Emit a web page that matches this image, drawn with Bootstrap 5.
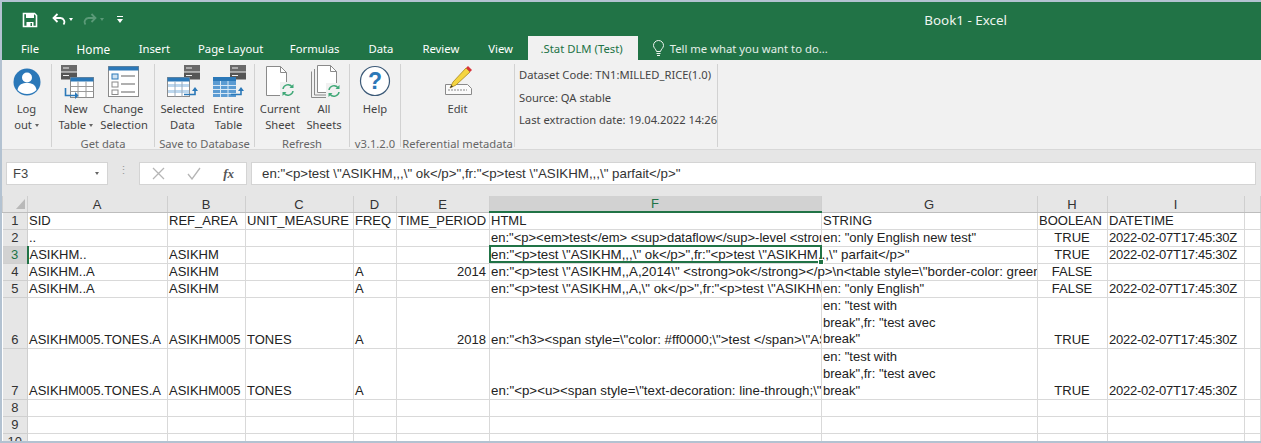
<!DOCTYPE html>
<html lang="en">
<head>
  <meta charset="UTF-8" />
  <meta name="viewport" content="width=device-width, initial-scale=1.0"/>
  <title>Book1 - Excel</title>
  <link href="https://cdn.jsdelivr.net/npm/bootstrap@5.3.3/dist/css/bootstrap.min.css" rel="stylesheet"/>
  <style>
    html, body { height: 443px; overflow: hidden; background: #fff; }
    .xl-window { height: 443px; width: 1261px; overflow: hidden; border: 2px solid #b3c2d1; border-right-width: 0; box-sizing: border-box; font-family: "Noto Sans", "Open Sans", sans-serif; font-size: 11.2px; color: #444; }
    .xl-top { background: #217346; color: #fff; height: 58px; flex: none; }
    .xl-qat { height: 34px; padding-left: 20px; padding-top: 1px; }
    .xl-m6 { margin-left: 6px; } .xl-m10 { margin-left: 10px; } .xl-m13 { margin-left: 13px; } .xl-m14 { margin-left: 14px; }
    .xl-title { margin-right: 254px; color: #eef5f0; font-size: 13.4px; padding-top: 1px; }
    .xl-tabs { height: 24px; }
    .xl-tabs .nav-link { color: #fff; padding: 4px 14.5px 0; height: 24px; font-size: 11.3px; line-height: 18px; }
    .xl-tabs .xl-file { padding: 4px 23px 0 19px; }
    .xl-tabs .xl-t-insert { padding-right: 13.5px; }
    .xl-tabs .xl-t-page { padding-right: 12px; }
    .xl-tabs .xl-t-home { font-size: 11.8px; padding-right: 14px; }
    .xl-tabs .xl-active { background: #f1f1f1; color: #217346; padding: 4px 15px 0 13px; margin-right: 14px; }
    .xl-tell { color: #e3efe8; gap: 5px; padding-top: 4px; line-height: 18px; font-size: 11.3px; }
    .xl-ribbon { background: #f1f1f1; height: 90px; flex: none; padding-top: 4px; border-bottom: 1px solid #d8d8d8; }
    .xl-group { height: 83px; border-right: 1px solid #d2d2d2; flex: none; }
    .xl-btns { height: 72px; flex: none; }
    .xl-btn { width: 46px; flex: none; text-align: center; line-height: 16px; color: #444; white-space: nowrap; }
    .xl-btn svg { display: block; margin: 0 auto 1px; height: 36px; width: 40px; }
    .xl-btn span { display: block; }
    .xl-narrow { width: 44px; }
    .xl-pe7 { padding-right: 7px; } .xl-ps2 { padding-left: 2px; } .xl-ms2 { margin-left: 1.5px; }
    .xl-label { color: #666; text-align: center; line-height: 14px; white-space: nowrap; padding-top: 1px; }
    .xl-caret { display: inline-block; width: 0; height: 0; border: 2.5px solid transparent; border-top: 3px solid #666; border-bottom: 0; vertical-align: 2px; margin-left: 3px; }
    .xl-g1 { width: 50px; } .xl-g2 { width: 103px; } .xl-g3 { width: 100px; } .xl-g4 { width: 95px; } .xl-g5 { width: 51px; } .xl-g6 { width: 114px; } .xl-g7 { width: 203px; }
    .xl-info { padding: 0 0 0 4px; line-height: 22.5px; white-space: nowrap; }
    .xl-strip { background: #e6e6e6; height: 46px; flex: none; padding: 12px 4px 0; gap: 0; }
    .xl-box { background: #fff; border: 1px solid #d4d4d4; height: 23px; flex: none; line-height: 21px; }
    .xl-name { width: 102px; padding-left: 6px; color: #444; font-family: "Liberation Sans", Arial, sans-serif; font-size: 13px; }
    .xl-dots { width: 31px; flex: none; text-align: center; color: #999; }
    .xl-fbtns { width: 108px; margin-right: 4px; padding: 0 12px; }
    .xl-fx { font-family: "Liberation Serif", serif; font-style: italic; font-weight: bold; font-size: 13px; color: #555; }
    .xl-input { width: 1005px; padding-left: 10px; font-family: "Liberation Sans", Arial, sans-serif; font-size: 13.3px; color: #333; white-space: nowrap; overflow: hidden; }
    .xl-grid { position: relative; flex: none; }
    .xl-sheet { table-layout: fixed; width: 1259px; border-collapse: collapse; margin: 0; font-family: "Liberation Sans", Arial, sans-serif; font-size: 13px; color: #222; }
    .xl-sheet td, .xl-sheet th { height: 17px; padding: 0 2px 0 1px; line-height: 16px; border: 1px solid #d9d9d9; white-space: nowrap; overflow: hidden; vertical-align: bottom; font-weight: normal; background: #fff; color: #222; box-shadow: none; }
    .xl-sheet thead th { height: 16px; line-height: 15px; background: #e6e6e6; text-align: center; font-size: 13px; border-color: #cfcfcf; color: #333; border-top: 0; border-bottom-color: #bdbdbd; }
    .xl-sheet tbody th { background: #e6e6e6; text-align: center; font-size: 13px; color: #333; border-color: #cfcfcf; padding: 0; border-left: 0; }
    .xl-sheet thead th.xl-selcol { background: #d2d2d2; color: #217346; border-bottom: 2px solid #217346; }
    .xl-sheet tbody th.xl-selrow { background: #d2d2d2; color: #217346; border-right: 2px solid #217346; }
    .xl-sheet tr.xl-tall td, .xl-sheet tr.xl-tall th { height: 51px; }
    .xl-sheet td.xl-wrap { white-space: normal; line-height: 16.7px; }
    .xl-sheet td.xl-num { text-align: right; padding-right: 3px; }
    .xl-sheet td.xl-mid { text-align: center; }
    .xl-sheet td.xl-date { letter-spacing: -.25px; }
    .xl-sheet td.xl-f { font-size: 13.3px; }
    .xl-corner { position: absolute; left: 14px; top: 3px; width: 0; height: 0; border-left: 9px solid transparent; border-bottom: 10px solid #b9b9b9; }
    .xl-cursor { position: absolute; left: 487px; top: 49px; width: 333px; height: 18px; border: 2px solid #217346; pointer-events: none; }
    .xl-handle { position: absolute; right: -4px; bottom: -4px; width: 6px; height: 6px; background: #217346; border: 1px solid #fff; }
  </style>
</head>
<body>
  <svg width="0" height="0" class="d-block" aria-hidden="true">
    <defs>
      <symbol id="i-server" viewBox="0 0 16 15">
        <rect x="0" y="0" width="16" height="6.5" fill="#6a6a6a"/><rect x="2" y="2.5" width="6" height="1" fill="#eee"/>
        <rect x="0" y="7.5" width="16" height="7" fill="#555"/><rect x="2" y="10" width="6" height="1" fill="#eee"/>
      </symbol>
      <symbol id="i-refresh" viewBox="0 0 14 14">
        <path d="M2 6a5 5 0 0 1 9-2.2M12 8a5 5 0 0 1-9 2.2" fill="none" stroke="#3fa877" stroke-width="1.5"/>
        <path d="M12.5 1v4h-4zM1.5 13V9h4z" fill="#3fa877"/>
      </symbol>
    </defs>
  </svg>
  <div class="xl-window d-flex flex-column">
    <div class="xl-top d-flex flex-column">
      <div class="xl-qat d-flex align-items-center">
        <svg width="16" height="16" viewBox="0 0 16 16"><path d="M1.5 1.5h11l2 2v11h-13z" fill="none" stroke="#fff" stroke-width="1.6"/><rect x="4" y="2" width="8" height="4" fill="#fff"/><rect x="4.5" y="10" width="7" height="4.5" fill="#fff"/><rect x="8.5" y="11" width="1.5" height="3" fill="#217346"/></svg>
        <svg class="xl-m14" width="14" height="14" viewBox="0 0 14 14"><path d="M5.5 1L1.5 5l4 4" fill="none" stroke="#fff" stroke-width="1.8"/><path d="M2 5h6.5a4 4 0 0 1 3 6.5" fill="none" stroke="#fff" stroke-width="1.8"/></svg>
        <span class="xl-caret xl-m6" style="border-top-color:#fff"></span>
        <svg class="xl-m10" width="14" height="14" viewBox="0 0 14 14"><path d="M8.5 1l4 4-4 4" fill="none" stroke="#5b9a78" stroke-width="1.8"/><path d="M12 5H5.5a4 4 0 0 0-3 6.5" fill="none" stroke="#5b9a78" stroke-width="1.8"/></svg>
        <span class="xl-caret xl-m6" style="border-top-color:#5b9a78"></span>
        <svg class="xl-m13" width="6" height="8" viewBox="0 0 6 8"><rect x="0" y="0" width="6" height="1" fill="#fff"/><path d="M0 3h6L3 7z" fill="#fff"/></svg>
        <div class="xl-title ms-auto">Book1 - Excel</div>
      </div>
      <nav class="nav xl-tabs flex-nowrap">
        <a class="nav-link xl-file" href="#">File</a>
        <a class="nav-link xl-t-home" href="#">Home</a>
        <a class="nav-link xl-t-insert" href="#">Insert</a>
        <a class="nav-link xl-t-page" href="#">Page Layout</a>
        <a class="nav-link" href="#">Formulas</a>
        <a class="nav-link" href="#">Data</a>
        <a class="nav-link" href="#">Review</a>
        <a class="nav-link" href="#">View</a>
        <a class="nav-link xl-active" href="#">.Stat DLM (Test)</a>
        <div class="xl-tell d-flex">
          <svg width="13" height="17" viewBox="0 0 13 17"><path d="M4.5 11.5C4 9 1.5 8 1.5 5.5a5 5 0 0 1 10 0C11.5 8 9 9 8.5 11.5zM4.5 13.5h4M5 15.5h3" fill="none" stroke="#eef5f0" stroke-width="1"/></svg>
          <span>Tell me what you want to do...</span>
        </div>
      </nav>
    </div>

    <div class="xl-ribbon d-flex">
      <div class="xl-group xl-g1 d-flex flex-column">
        <div class="xl-btns d-flex justify-content-center">
          <div class="xl-btn">
            <svg viewBox="0 0 40 36"><circle cx="20" cy="18" r="13.5" fill="#2b78b8"/><circle cx="20" cy="13.5" r="5" fill="#fff"/><path d="M10.5 26c1-6 5-7 9.5-7s8.5 1 9.5 7c-2.5 2.5-6 4-9.5 4s-7-1.5-9.5-4z" fill="#fff"/></svg>
            <span>Log</span><span>out<i class="xl-caret"></i></span>
          </div>
        </div>
      </div>

      <div class="xl-group xl-g2 d-flex flex-column">
        <div class="xl-btns xl-pe7 d-flex justify-content-center">
          <div class="xl-btn">
            <svg viewBox="0 0 40 36"><use href="#i-server" x="5" y="1" width="16" height="15"/><rect x="14.5" y="13.5" width="23" height="20" fill="#fff" stroke="#8a8a8a"/><rect x="14.5" y="13.5" width="23" height="4" fill="#2b78b8"/><path d="M14.5 22.5h23M14.5 27.5h23M22 17.5v16M30 17.5v16" stroke="#9a9a9a"/><path d="M9.5 24v7.5H20" fill="none" stroke="#2b78b8" stroke-width="1.6"/><path d="M19 28l3.5 3.5L19 35z" fill="#2b78b8"/></svg>
            <span>New</span><span>Table<i class="xl-caret"></i></span>
          </div>
          <div class="xl-btn xl-ms2">
            <svg viewBox="0 0 40 36"><rect x="5.5" y="2.5" width="30" height="30" fill="#fff" stroke="#8a8a8a"/><rect x="5.5" y="2.5" width="30" height="4" fill="#2b78b8"/><rect x="9" y="10" width="6" height="5" fill="#cfe2f2" stroke="#2b78b8"/><rect x="9" y="18" width="6" height="5" fill="#fff" stroke="#8a8a8a"/><rect x="9" y="26" width="6" height="4.5" fill="#fff" stroke="#8a8a8a"/><path d="M18 12h14M18 20h14M18 28h14" stroke="#b0b0b0" stroke-width="2"/></svg>
            <span>Change</span><span>Selection</span>
          </div>
        </div>
        <div class="xl-label">Get data</div>
      </div>

      <div class="xl-group xl-g3 d-flex flex-column">
        <div class="xl-btns xl-ps2 d-flex justify-content-center">
          <div class="xl-btn">
            <svg viewBox="0 0 40 36"><use href="#i-server" x="21" y="1" width="16" height="15"/><rect x="4.5" y="13.5" width="22" height="19" fill="#fff" stroke="#8a8a8a"/><rect x="4.5" y="13.5" width="22" height="4" fill="#2b78b8"/><rect x="5" y="20" width="21" height="3" fill="#bcd7ee"/><rect x="5" y="26" width="21" height="3" fill="#bcd7ee"/><path d="M12 17.5v15M19 17.5v15" stroke="#9ab"/><path d="M21 30.5h11V26" fill="none" stroke="#2b78b8" stroke-width="1.6"/><path d="M29 27l3-4 3 4z" fill="#2b78b8"/></svg>
            <span>Selected</span><span>Data</span>
          </div>
          <div class="xl-btn">
            <svg viewBox="0 0 40 36"><use href="#i-server" x="21" y="1" width="16" height="15"/><rect x="4" y="13" width="23" height="20" fill="#5b9bd2"/><rect x="4" y="13" width="23" height="4" fill="#2b78b8"/><path d="M4 21.5h23M4 25.5h23M4 29.5h23M11.5 17v16M19 17v16" stroke="#d8e8f5"/><path d="M22 30.5h10V26" fill="none" stroke="#2b78b8" stroke-width="1.6"/><path d="M29 27l3-4 3 4z" fill="#2b78b8"/></svg>
            <span>Entire</span><span>Table</span>
          </div>
        </div>
        <div class="xl-label">Save to Database</div>
      </div>

      <div class="xl-group xl-g4 d-flex flex-column">
        <div class="xl-btns d-flex justify-content-center">
          <div class="xl-btn xl-narrow">
            <svg viewBox="0 0 40 36"><path d="M6.5 2.5h14l6 6v23h-20z" fill="#fff" stroke="#8a8a8a"/><path d="M20.5 2.5v6h6" fill="none" stroke="#8a8a8a"/><rect x="20" y="18" width="15" height="15" fill="#f1f1f1"/><use href="#i-refresh" x="21" y="19" width="14" height="14"/></svg>
            <span>Current</span><span>Sheet</span>
          </div>
          <div class="xl-btn xl-narrow">
            <svg viewBox="0 0 40 36"><path d="M7.5 7.5v26h17" fill="none" stroke="#8a8a8a"/><path d="M10.5 5v26h17" fill="none" stroke="#8a8a8a"/><path d="M13.5 1.5h13l6 6v21h-19z" fill="#fff" stroke="#8a8a8a"/><path d="M26.5 1.5v6h6" fill="none" stroke="#8a8a8a"/><rect x="22" y="19" width="15" height="15" fill="#f1f1f1"/><use href="#i-refresh" x="23" y="20" width="14" height="14"/></svg>
            <span>All</span><span>Sheets</span>
          </div>
        </div>
        <div class="xl-label">Refresh</div>
      </div>

      <div class="xl-group xl-g5 d-flex flex-column">
        <div class="xl-btns d-flex justify-content-center">
          <div class="xl-btn">
            <svg viewBox="0 0 40 36"><circle cx="20" cy="17" r="14.5" fill="#fff" stroke="#3c5a78" stroke-width="1.2"/><text x="20" y="25" text-anchor="middle" font-family="Liberation Sans" font-weight="bold" font-size="23" fill="#2b78b8">?</text></svg>
            <span>Help</span>
          </div>
        </div>
        <div class="xl-label">v3.1.2.0</div>
      </div>

      <div class="xl-group xl-g6 d-flex flex-column">
        <div class="xl-btns d-flex justify-content-center">
          <div class="xl-btn">
            <svg viewBox="0 0 40 36"><path d="M7.5 20.5h22l4 4v6h-26z" fill="#fafafa" stroke="#8a8a8a"/><path d="M10 26h19" stroke="#888" stroke-dasharray="2 1"/><path d="M12 24l3-6L28 4l4 4-14 13z" fill="#f5d540" stroke="#a8871a" stroke-width=".8"/><path d="M28 4l2-2 4 4-2 2z" fill="#d8343a"/><path d="M12 24l1.5-3 1.5 1.5z" fill="#333"/></svg>
            <span>Edit</span>
          </div>
        </div>
        <div class="xl-label">Referential metadata</div>
      </div>

      <div class="xl-group xl-g7 xl-info">
        <div>Dataset Code: TN1:MILLED_RICE(1.0)</div>
        <div>Source: QA stable</div>
        <div>Last extraction date: 19.04.2022 14:26</div>
      </div>
    </div>

    <div class="xl-strip d-flex">
      <div class="xl-box xl-name d-flex justify-content-between align-items-center pe-2"><span>F3</span><span class="xl-caret"></span></div>
      <div class="xl-dots">⋮</div>
      <div class="xl-box xl-fbtns d-flex justify-content-between align-items-center">
        <svg width="13" height="13" viewBox="0 0 13 13"><path d="M1 1l11 11M12 1L1 12" stroke="#b5b5b5" stroke-width="1.3"/></svg>
        <svg width="14" height="13" viewBox="0 0 14 13"><path d="M1 7l4 5 8-11" fill="none" stroke="#b5b5b5" stroke-width="1.3"/></svg>
        <span class="xl-fx">fx</span>
      </div>
      <div class="xl-box xl-input">en:"&lt;p&gt;test \"ASIKHM,,,\" ok&lt;/p&gt;",fr:"&lt;p&gt;test \"ASIKHM,,,\" parfait&lt;/p&gt;"</div>
    </div>

    <div class="xl-grid">
      <table class="table xl-sheet">
        <colgroup>
          <col style="width:25px"><col style="width:140px"><col style="width:78px"><col style="width:108px"><col style="width:43px"><col style="width:93px"><col style="width:332px"><col style="width:216px"><col style="width:70px"><col style="width:137px"><col>
        </colgroup>
        <thead>
          <tr><th></th><th>A</th><th>B</th><th>C</th><th>D</th><th>E</th><th class="xl-selcol">F</th><th>G</th><th>H</th><th>I</th><th></th></tr>
        </thead>
        <tbody>
          <tr><th>1</th><td>SID</td><td>REF_AREA</td><td>UNIT_MEASURE</td><td>FREQ</td><td>TIME_PERIOD</td><td>HTML</td><td>STRING</td><td>BOOLEAN</td><td>DATETIME</td><td></td></tr>
          <tr><th>2</th><td>..</td><td></td><td></td><td></td><td></td><td>en:"&lt;p&gt;&lt;em&gt;test&lt;/em&gt; &lt;sup&gt;dataflow&lt;/sup&gt;-level &lt;strong&gt;ok&lt;/strong&gt;&lt;/p&gt;"</td><td>en: "only English new test"</td><td class="xl-mid">TRUE</td><td class="xl-date">2022-02-07T17:45:30Z</td><td></td></tr>
          <tr><th class="xl-selrow">3</th><td>ASIKHM..</td><td>ASIKHM</td><td></td><td></td><td></td><td colspan="2" class="xl-f">en:"&lt;p&gt;test \"ASIKHM,,,\" ok&lt;/p&gt;",fr:"&lt;p&gt;test \"ASIKHM,,,\" parfait&lt;/p&gt;"</td><td class="xl-mid">TRUE</td><td class="xl-date">2022-02-07T17:45:30Z</td><td></td></tr>
          <tr><th>4</th><td>ASIKHM..A</td><td>ASIKHM</td><td></td><td>A</td><td class="xl-num">2014</td><td colspan="2" class="xl-f">en:"&lt;p&gt;test \"ASIKHM,,A,2014\" &lt;strong&gt;ok&lt;/strong&gt;&lt;/p&gt;\n&lt;table style=\"border-color: green;\"&gt;</td><td class="xl-mid">FALSE</td><td></td><td></td></tr>
          <tr><th>5</th><td>ASIKHM..A</td><td>ASIKHM</td><td></td><td>A</td><td></td><td class="xl-f">en:"&lt;p&gt;test \"ASIKHM,,A,\" ok&lt;/p&gt;",fr:"&lt;p&gt;test \"ASIKHM,,A,\" parfait&lt;/p&gt;"</td><td>en: "only English"</td><td class="xl-mid">FALSE</td><td class="xl-date">2022-02-07T17:45:30Z</td><td></td></tr>
          <tr class="xl-tall"><th>6</th><td>ASIKHM005.TONES.A</td><td>ASIKHM005</td><td>TONES</td><td>A</td><td class="xl-num">2018</td><td class="xl-f">en:"&lt;h3&gt;&lt;span style=\"color: #ff0000;\"&gt;test &lt;/span&gt;\"ASIKHM005.TONES.A,2018\"&lt;/h3&gt;"</td><td class="xl-wrap">en: "test with<br>break",fr: "test avec<br>break"</td><td class="xl-mid">TRUE</td><td class="xl-date">2022-02-07T17:45:30Z</td><td></td></tr>
          <tr class="xl-tall"><th>7</th><td>ASIKHM005.TONES.A</td><td>ASIKHM005</td><td>TONES</td><td>A</td><td></td><td class="xl-f">en:"&lt;p&gt;&lt;u&gt;&lt;span style=\"text-decoration: line-through;\"&gt;test&lt;/span&gt;&lt;/u&gt;&lt;/p&gt;"</td><td class="xl-wrap">en: "test with<br>break",fr: "test avec<br>break"</td><td class="xl-mid">TRUE</td><td class="xl-date">2022-02-07T17:45:30Z</td><td></td></tr>
          <tr><th>8</th><td></td><td></td><td></td><td></td><td></td><td></td><td></td><td></td><td></td><td></td></tr>
          <tr><th>9</th><td></td><td></td><td></td><td></td><td></td><td></td><td></td><td></td><td></td><td></td></tr>
          <tr><th>10</th><td></td><td></td><td></td><td></td><td></td><td></td><td></td><td></td><td></td><td></td></tr>
        </tbody>
      </table>
      <div class="xl-corner"></div>
      <div class="xl-cursor"><div class="xl-handle"></div></div>
    </div>
  </div>
  <script src="https://cdn.jsdelivr.net/npm/bootstrap@5.3.3/dist/js/bootstrap.bundle.min.js"></script>
</body>
</html>
